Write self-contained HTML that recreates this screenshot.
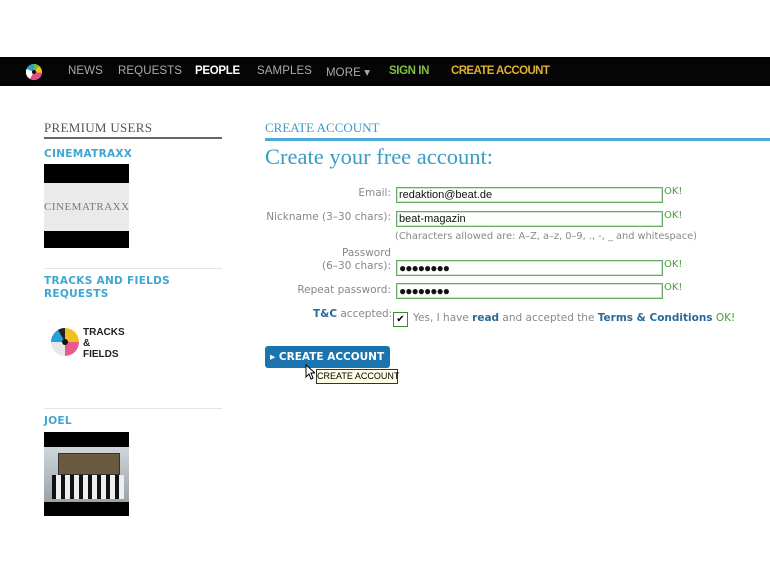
<!DOCTYPE html>
<html><head><style>
body{margin:0;width:770px;height:578px;background:#fff;position:relative;overflow:hidden;font-family:"DejaVu Sans","Liberation Sans",sans-serif}
.a{position:absolute;white-space:nowrap}
.nav{position:absolute;left:0;top:57px;width:770px;height:29px;background:#050505}
.nav span{position:absolute;top:8px;font:11.5px "Liberation Sans",sans-serif;color:#aaa;letter-spacing:.1px}
.lbl{position:absolute;right:379px;font-size:10.5px;color:#888;text-align:right}
.inp{position:absolute;left:396px;width:263px;height:14px;border:1px solid #6a6;box-shadow:inset 0 0 0 1px #cfe6cf;font:11px "Liberation Sans",sans-serif;color:#111;line-height:14px;padding-left:2px;box-sizing:content-box}
.ok{position:absolute;left:664px;font-size:10px;color:#4a9a3a}
.side{position:absolute;left:44px;font-size:10.5px;font-weight:bold;color:#3ea6d0;letter-spacing:.3px}
.hr{position:absolute;left:44px;width:178px;height:1px;background:#e4e4e4}
</style></head><body>
<div class="nav">
<svg class="a" style="left:25px;top:6px" width="18" height="18" viewBox="0 0 18 18"><circle cx="9" cy="9" r="8" fill="#f0c020"/><path d="M9 9L9 1A8 8 0 0 0 1.5 6Z" fill="#2a9fd8"/><path d="M9 9L1.5 6A8 8 0 0 0 5 16Z" fill="#fff"/><path d="M9 9L5 16A8 8 0 0 0 17 10Z" fill="#e0508a"/><path d="M9 9L9 1A8 8 0 0 1 14 3Z" fill="#60c040"/><circle cx="9" cy="9" r="2" fill="#111"/></svg>
<span style="left:68px">NEWS</span>
<span style="left:118px">REQUESTS</span>
<span style="left:195px;color:#fff;font-weight:bold;letter-spacing:-.3px">PEOPLE</span>
<span style="left:257px">SAMPLES</span>
<span style="left:326px">MORE ▾</span>
<span style="left:389px;color:#7fc040;font-weight:bold;letter-spacing:-.4px">SIGN IN</span>
<span style="left:451px;color:#e0b030;font-weight:bold;letter-spacing:-.6px">CREATE ACCOUNT</span>
</div>

<div class="a" style="left:44px;top:120px;font:13px 'Liberation Serif',serif;color:#555;letter-spacing:.3px">PREMIUM USERS</div>
<div class="a" style="left:44px;top:137px;width:178px;height:2px;background:#666"></div>
<div class="side" style="top:148px">CINEMATRAXX</div>
<div class="a" style="left:44px;top:164px;width:85px;height:84px;background:#000"></div>
<div class="a" style="left:44px;top:183px;width:85px;height:48px;background:#eaeaea;font:11px 'Liberation Serif',serif;color:#777;line-height:48px;letter-spacing:.5px">CINEMATRAXX</div>
<div class="hr" style="top:268px"></div>
<div class="side" style="top:275px;line-height:13px">TRACKS AND FIELDS<br>REQUESTS</div>
<svg class="a" style="left:50px;top:327px" width="30" height="30" viewBox="0 0 30 30"><path d="M15 15L15 1A14 14 0 0 1 29 15Z" fill="#f0c020"/><path d="M15 15L29 15A14 14 0 0 1 15 29Z" fill="#e85a8a"/><path d="M15 15L15 29A14 14 0 0 1 1 15Z" fill="#e8e8e8"/><path d="M15 15L1 15A14 14 0 0 1 15 1Z" fill="#2a9fd8"/><path d="M15 15L8 3A14 14 0 0 1 15 1Z" fill="#222"/><circle cx="15" cy="15" r="3" fill="#111"/></svg>
<div class="a" style="left:83px;top:327px;font:bold 10px 'Liberation Sans',sans-serif;color:#222;line-height:11px">TRACKS<br>&amp;<br>FIELDS</div>
<div class="hr" style="top:408px"></div>
<div class="side" style="top:415px">JOEL</div>
<div class="a" style="left:44px;top:432px;width:85px;height:84px;background:#000"></div>
<div class="a" style="left:44px;top:447px;width:85px;height:55px;background:linear-gradient(#cfd6dc,#9aa3a8)"></div>
<div class="a" style="left:58px;top:453px;width:60px;height:20px;background:#6a5a40;border:1px solid #333"></div>
<div class="a" style="left:52px;top:475px;width:72px;height:24px;background:repeating-linear-gradient(90deg,#111 0 4px,#eee 4px 9px)"></div>

<div class="a" style="left:265px;top:120px;font:13px 'Liberation Serif',serif;color:#3b9cc4">CREATE ACCOUNT</div>
<div class="a" style="left:265px;top:138px;width:505px;height:3px;background:#4aaad8"></div>
<div class="a" style="left:265px;top:144px;font:22.5px 'Liberation Serif',serif;color:#3b9cc4">Create your free account:</div>

<div class="lbl" style="top:187px">Email:</div>
<div class="inp" style="top:187px">redaktion@beat.de</div><div class="ok" style="top:186px">OK!</div>
<div class="lbl" style="top:211px">Nickname (3–30 chars):</div>
<div class="inp" style="top:211px">beat-magazin</div><div class="ok" style="top:210px">OK!</div>
<div class="a" style="left:395px;top:231px;font-size:9.8px;color:#888">(Characters allowed are: A–Z, a–z, 0–9, ., -, _ and whitespace)</div>
<div class="lbl" style="top:247px;line-height:13px">Password<br>(6–30 chars):</div>
<div class="inp" style="top:260px;font-size:12px;letter-spacing:-1px">●●●●●●●●</div><div class="ok" style="top:259px">OK!</div>
<div class="lbl" style="top:284px">Repeat password:</div>
<div class="inp" style="top:283px;font-size:12px;letter-spacing:-1px">●●●●●●●●</div><div class="ok" style="top:282px">OK!</div>
<div class="a" style="left:313px;top:308px;font-size:10.5px;color:#888"><b style="color:#2a6a9a">T&amp;C</b> accepted:</div>
<div class="a" style="left:393px;top:312px;width:13px;height:13px;border:1px solid #3a8a3a;font-size:10px;line-height:13px;text-align:center">✔</div>
<div class="a" style="left:413px;top:312px;font-size:10.5px;color:#888">Yes, I have <b style="color:#2a6a9a">read</b> and accepted the <b style="color:#2a6a9a">Terms &amp; Conditions</b> <span style="color:#4a9a3a">OK!</span></div>

<div class="a" style="left:265px;top:346px;width:125px;height:22px;background:#1a74b0;border-radius:3px;color:#fff;font:bold 10.5px 'DejaVu Sans',sans-serif;line-height:22px;text-indent:5px">▸ CREATE ACCOUNT</div>
<div class="a" style="left:316px;top:369px;width:80px;height:13px;border:1px solid #333;background:#ffffe8;font:9px 'Liberation Sans',sans-serif;line-height:13px;text-align:center">CREATE ACCOUNT</div>
<svg class="a" style="left:305px;top:364px" width="10" height="16" viewBox="0 0 10 16"><path d="M1 1L1 13L4 10L6 15L8 14L6 9L10 9Z" fill="#fff" stroke="#000" stroke-width="1"/></svg>
</body></html>
